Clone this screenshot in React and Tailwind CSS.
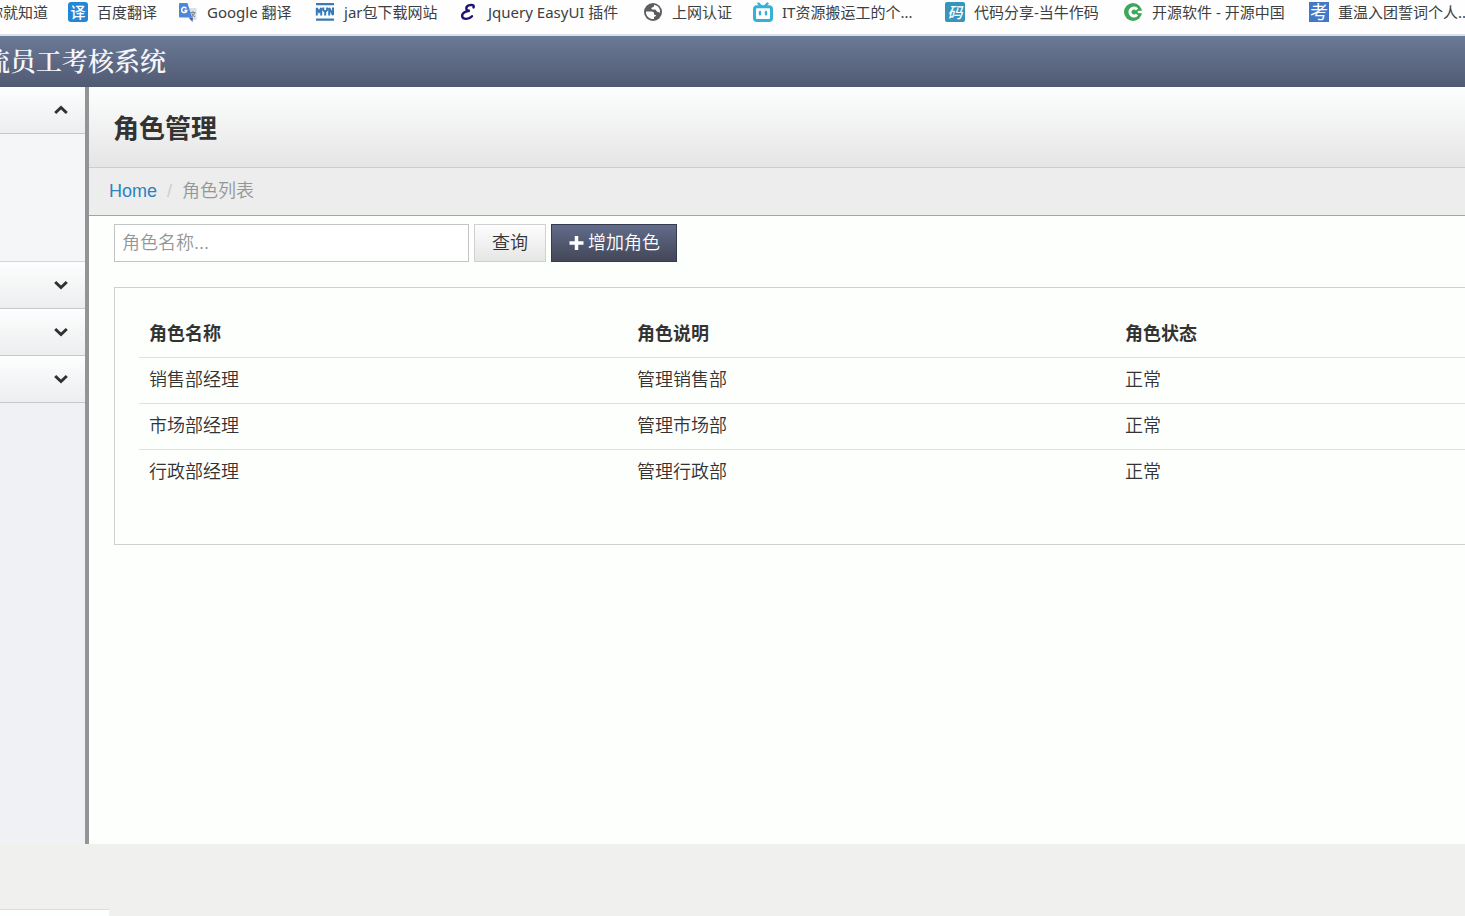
import { useState } from "react";

const TranslateIcon = () => (
  <svg viewBox="0 0 20 20" className="size-5">
    <rect width="20" height="20" rx="3" fill="#2386d9" />
    <text x="10" y="15.5" fontSize="15" fontWeight="500" textAnchor="middle" fill="#fff" fontFamily="Noto Sans CJK SC">译</text>
  </svg>
);

const GoogleIcon = () => (
  <svg viewBox="0 0 20 20" className="size-5">
    <path d="M8 6h9.5a1 1 0 0 1 1 1v10a1 1 0 0 1-1 1H13z" fill="#dcdfe3" />
    <path d="M12.5 10.5h5M15 9.300v1.200M16.700 10.800c-.6 2-2 3.200-3.200 4M13.700 11.500c.8 1.700 2 2.600 3.300 3.400" stroke="#7c858f" strokeWidth="1.1" fill="none" />
    <path d="M10.5 15.5h4.500L14.500 20z" fill="#3d66b8" />
    <path d="M1.500 1H9.500l4.500 14.500H2a1 1 0 0 1-1-1v-13z" fill="#4f86d8" />
    <path d="M8.400 6.500a2.600 2.600 0 1 0 .4 2H6.400" stroke="#fff" strokeWidth="1.500" fill="none" />
  </svg>
);

const MvnIcon = () => (
  <svg viewBox="0 0 20 20" className="size-5">
    <path d="M1 1h18v2.200H1zM1 16.500h18v2.200H1z" fill="#3d78b4" />
    <path d="M1.800 13.500V6l2.200 4 2.200-4v7.500M8.300 5.500v2.500l1.900 2.200L12.100 8V5.500M10.200 10v3.500M14.200 13.500V6l3.800 7V5.500" stroke="#3579b8" strokeWidth="2" fill="none" />
  </svg>
);

const EasyIcon = () => (
  <svg viewBox="0 0 20 20" className="size-5">
    <path d="M14.500 5.500C15.500 3 13 2.600 10.500 3.200 6.800 4 5.500 8.500 10.800 8.800 6.500 9 2.500 11.500 3.200 14.500c.8 3.300 7 3 9.800-.3" stroke="#1c1470" strokeWidth="2.400" strokeLinecap="round" fill="none" />
  </svg>
);

const GlobeIcon = () => (
  <svg viewBox="0 0 20 20" className="size-5">
    <circle cx="10" cy="10" r="9" fill="#5a5d61" />
    <path d="M3 9.500h5.500c1.600 0 2.500.9 2.500 2.200 0 1 .8 1.300 2 1.300-.2 1.800-1.500 1.800-2 2v2c-4.600.4-8.400-3-8-7.500z" fill="#fff" />
    <path d="M11 3c.3 1.500-.5 2.500-2 2.500-.8 0-.8 1.500 0 2h3c1.200 0 1.500 2.500 2.800 2.500.8 0 1.400.8 2.200.7C17.700 7 15 3.300 11 3z" fill="#fff" />
  </svg>
);

const TvIcon = () => (
  <svg viewBox="0 0 20 20" className="size-5">
    <path d="M5.500 1.500L8 4M14.500 1.500L12 4" stroke="#35b0da" strokeWidth="2.400" strokeLinecap="round" />
    <rect x="1.500" y="4.800" width="17" height="13.700" rx="2.500" stroke="#35b0da" strokeWidth="3" fill="none" />
    <path d="M7 10v2.200M13 10v2.200" stroke="#35b0da" strokeWidth="2.400" strokeLinecap="round" />
  </svg>
);

const CodeIcon = () => (
  <svg viewBox="0 0 20 20" className="size-5">
    <rect width="20" height="20" rx="2" fill="#3596bd" />
    <text x="10" y="15.5" fontSize="15" textAnchor="middle" fill="#fff" fontStyle="italic" fontWeight="500" fontFamily="Noto Sans CJK SC">码</text>
  </svg>
);

const OscIcon = () => (
  <svg viewBox="0 0 20 20" className="size-5">
    <circle cx="10" cy="10" r="9" fill="#3fa65a" />
    <path d="M14 7.400a4 4 0 1 0 0 5.200" stroke="#fff" strokeWidth="3" fill="none" />
    <path d="M14.800 8.800H20v2.400h-5.200z" fill="#fff" />
  </svg>
);

const ExamIcon = () => (
  <svg viewBox="0 0 20 20" className="size-5">
    <rect width="20" height="20" fill="#4377c8" />
    <text x="10" y="16.5" fontSize="18" textAnchor="middle" fill="#fff" fontFamily="Noto Sans CJK SC">考</text>
  </svg>
);

const BOOKMARKS = [
  { name: "百度翻译", Icon: TranslateIcon, width: "w-[90px]" },
  { name: "Google 翻译", Icon: GoogleIcon, width: "w-[117px]" },
  { name: "jar包下载网站", Icon: MvnIcon, width: "w-[124px]" },
  { name: "Jquery EasyUI 插件", Icon: EasyIcon, width: "w-[164px]" },
  { name: "上网认证", Icon: GlobeIcon, width: "w-[90px]" },
  { name: "IT资源搬运工的个...", Icon: TvIcon, width: "w-[172px]" },
  { name: "代码分享-当牛作码", Icon: CodeIcon, width: "w-[158px]" },
  { name: "开源软件 - 开源中国", Icon: OscIcon, width: "w-[166px]" },
  { name: "重温入团誓词个人...", Icon: ExamIcon, width: "w-[172px]" },
];

const ROLES = [
  { name: "销售部经理", desc: "管理销售部", status: "正常" },
  { name: "市场部经理", desc: "管理市场部", status: "正常" },
  { name: "行政部经理", desc: "管理行政部", status: "正常" },
];

const Chevron = ({ up }) => (
  <svg viewBox="0 0 14 10" className="h-[10px] w-[14px]">
    <path
      d={up ? "M1.2 8L7 2.500 12.800 8" : "M1.2 2L7 7.500 12.800 2"}
      stroke="#2f3132"
      strokeWidth="3"
      fill="none"
    />
  </svg>
);

const BookmarkBar = () => (
  <nav className="flex h-[34px] items-start gap-5 overflow-hidden bg-[#fdfefd] pt-px font-['Noto_Sans','Noto_Sans_CJK_SC',sans-serif] text-[15px] leading-[22px] whitespace-nowrap text-[#3c4043]">
    <a href="#" className="-ml-3 shrink-0">你就知道</a>
    {BOOKMARKS.map(({ name, Icon, width }) => (
      <a
        key={name}
        href="#"
        className={`flex shrink-0 items-center gap-[9px] ${width}`}
      >
        <Icon />
        {name}
      </a>
    ))}
  </nav>
);

const Sidebar = () => {
  const [open, setOpen] = useState(0);

  return (
    <aside className="w-[89px] shrink-0 border-r-4 border-[#929596] bg-[#f0f1f4]">
      {[0, 1, 2, 3].map((i) => (
        <div key={i}>
          <button
            aria-label="菜单"
            aria-expanded={open === i}
            onClick={() => setOpen(i)}
            className="flex h-[47px] w-full items-center justify-end border-b border-[#c6c9ca] bg-linear-to-b from-[#fdfefe] to-[#eceeef] pr-[17px]"
          >
            <Chevron up={open === i} />
          </button>
          {open === i && (
            <div className="h-32 border-b border-[#d3d5d6] bg-[#f5f6f7]" />
          )}
        </div>
      ))}
    </aside>
  );
};

const App = () => {
  const [keyword, setKeyword] = useState("");

  return (
    <div className="flex min-h-screen flex-col overflow-hidden bg-[#f0f1ef] font-['Liberation_Sans','Noto_Sans_CJK_SC',sans-serif] text-lg text-[#333]">
      <BookmarkBar />

      <header className="flex h-[53px] items-center overflow-hidden border-t-2 border-[#dce0ea] bg-linear-to-b from-[#6b7a97] to-[#515a73] pb-0.5">
        <h1 className="-ml-4 font-['Noto_Serif_CJK_SC','Noto_Sans_CJK_SC',serif] text-[26px] font-semibold whitespace-nowrap text-[#f4f7fd]">
          流员工考核系统
        </h1>
      </header>

      <div className="mb-[72px] flex grow">
        <Sidebar />

        <main className="min-w-0 grow bg-[#fdfffd]">
          <div className="flex h-[81px] items-center border-b border-[#cccecd] bg-linear-to-b from-[#fdfefe] to-[#e4e5e4] px-6 pt-1">
            <h2 className="text-[26px] font-bold">角色管理</h2>
          </div>

          <div className="flex h-12 items-center border-b border-[#a3a5a5] bg-[#ededed] px-5 pb-0.5">
            <a href="#" className="text-[#2a83c0]">Home</a>
            <span className="px-2.5 text-[#ccc]">/</span>
            <span className="font-[350] text-[#949696]">角色列表</span>
          </div>

          <form
            className="flex gap-[5px] px-[25px] pt-2"
            onSubmit={(e) => e.preventDefault()}
          >
            <input
              type="text"
              aria-label="角色名称"
              placeholder="角色名称..."
              value={keyword}
              onChange={(e) => setKeyword(e.target.value)}
              className="h-[38px] w-[355px] border border-[#c3c5c4] bg-white px-[7px] font-[350] placeholder:text-[#949696]"
            />
            <button
              type="submit"
              className="h-[38px] border border-[#cfd0cf] bg-linear-to-b from-[#fdfdfd] to-[#e6e6e6] px-[17px] font-[350]"
            >
              查询
            </button>
            <button
              type="button"
              className="flex h-[38px] items-center gap-1 border border-[#363c50] bg-linear-to-b from-[#626c8a] to-[#434758] px-4 font-[350] text-white"
            >
              <svg viewBox="0 0 16 16" className="size-4">
                <path d="M8.500 1v14M1.500 8h14" stroke="#fff" strokeWidth="3.500" />
              </svg>
              增加角色
            </button>
          </form>

          <section className="mt-[25px] ml-[25px] border border-r-0 border-[#cfd1d0] pt-6 pb-[49px] pl-6">
            <table className="w-full table-fixed text-left leading-[29px]">
              <thead>
                <tr>
                  <th className="w-[488px] px-2.5 py-2 font-bold">角色名称</th>
                  <th className="w-[488px] px-2.5 py-2 font-bold">角色说明</th>
                  <th className="px-2.5 py-2 font-bold">角色状态</th>
                </tr>
              </thead>
              <tbody className="font-[350]">
                {ROLES.map((role) => (
                  <tr key={role.name} className="border-t border-[#dfe1e0]">
                    <td className="px-2.5 py-2">{role.name}</td>
                    <td className="px-2.5 py-2">{role.desc}</td>
                    <td className="px-2.5 py-2">{role.status}</td>
                  </tr>
                ))}
              </tbody>
            </table>
          </section>
        </main>
      </div>

      {/* browser status bubble */}
      <div className="fixed bottom-0 left-0 h-[7px] w-[109px] border-t border-[#dcdddf] bg-[#fdfefe]" />
    </div>
  );
};

export default App;
